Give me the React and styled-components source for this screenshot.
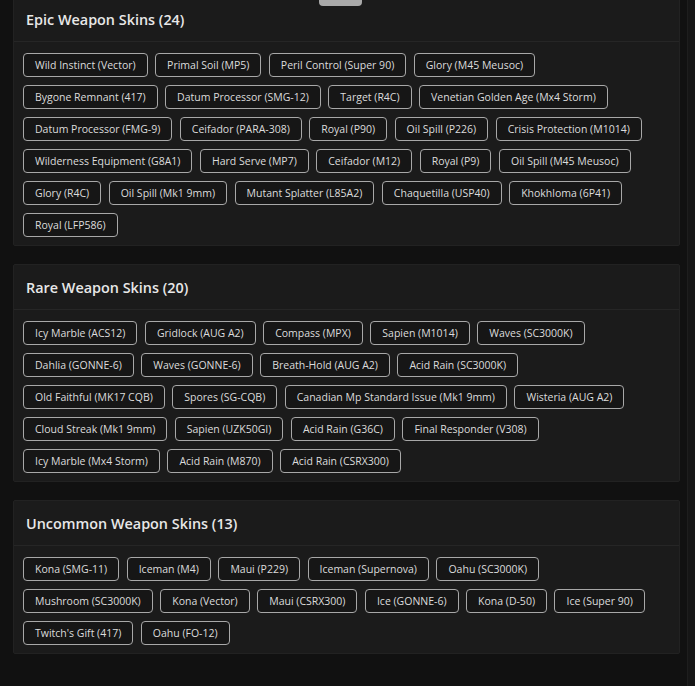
import React from "react";
import styled, { createGlobalStyle } from "styled-components";

const sections = [
  {
    title: "Epic Weapon Skins",
    rows: [
      ["Wild Instinct (Vector)", "Primal Soil (MP5)", "Peril Control (Super 90)", "Glory (M45 Meusoc)"],
      ["Bygone Remnant (417)", "Datum Processor (SMG-12)", "Target (R4C)", "Venetian Golden Age (Mx4 Storm)"],
      ["Datum Processor (FMG-9)", "Ceifador (PARA-308)", "Royal (P90)", "Oil Spill (P226)", "Crisis Protection (M1014)"],
      ["Wilderness Equipment (G8A1)", "Hard Serve (MP7)", "Ceifador (M12)", "Royal (P9)", "Oil Spill (M45 Meusoc)"],
      ["Glory (R4C)", "Oil Spill (Mk1 9mm)", "Mutant Splatter (L85A2)", "Chaquetilla (USP40)", "Khokhloma (6P41)"],
      ["Royal (LFP586)"],
    ],
  },
  {
    title: "Rare Weapon Skins",
    rows: [
      ["Icy Marble (ACS12)", "Gridlock (AUG A2)", "Compass (MPX)", "Sapien (M1014)", "Waves (SC3000K)"],
      ["Dahlia (GONNE-6)", "Waves (GONNE-6)", "Breath-Hold (AUG A2)", "Acid Rain (SC3000K)"],
      ["Old Faithful (MK17 CQB)", "Spores (SG-CQB)", "Canadian Mp Standard Issue (Mk1 9mm)", "Wisteria (AUG A2)"],
      ["Cloud Streak (Mk1 9mm)", "Sapien (UZK50GI)", "Acid Rain (G36C)", "Final Responder (V308)"],
      ["Icy Marble (Mx4 Storm)", "Acid Rain (M870)", "Acid Rain (CSRX300)"],
    ],
  },
  {
    title: "Uncommon Weapon Skins",
    rows: [
      ["Kona (SMG-11)", "Iceman (M4)", "Maui (P229)", "Iceman (Supernova)", "Oahu (SC3000K)"],
      ["Mushroom (SC3000K)", "Kona (Vector)", "Maui (CSRX300)", "Ice (GONNE-6)", "Kona (D-50)", "Ice (Super 90)"],
      ["Twitch's Gift (417)", "Oahu (FO-12)"],
    ],
  },
];

export default function App() {
  return (
    <>
      <GlobalStyle />
      <Page>
        <TopTab />
        <Content>
          {sections.map((s) => (
            <Card key={s.title}>
              <CardHeader>
                <Title>
                  {s.title} ({s.rows.flat().length})
                </Title>
              </CardHeader>
              <ChipArea>
                {s.rows.map((row, i) => (
                  <ChipRow key={i}>
                    {row.map((name) => (
                      <Chip key={name}>{name}</Chip>
                    ))}
                  </ChipRow>
                ))}
              </ChipArea>
            </Card>
          ))}
        </Content>
        <ScrollTrack />
      </Page>
    </>
  );
}

const GlobalStyle = createGlobalStyle`
  html, body {
    margin: 0;
    padding: 0;
    background: #111111;
    overflow: hidden;
  }
  body {
    font-family: "Open Sans", "Liberation Sans", sans-serif;
    color: #e6e6e6;
  }
`;

const Page = styled.div`
  position: relative;
  display: flex;
  height: 686px;
  overflow: hidden;
  background: #111111;
`;

const TopTab = styled.div`
  position: absolute;
  top: 0;
  left: 319px;
  width: 43px;
  height: 6px;
  background: #a9a9a9;
  border-radius: 0 0 4px 4px;
  z-index: 2;
`;

const Content = styled.div`
  flex: 1;
  display: flex;
  flex-direction: column;
  gap: 18px;
  padding: 0 7px 0 13px;
  margin-top: -4px;
`;

const ScrollTrack = styled.div`
  width: 7px;
  background: #161616;
  border-left: 1px solid #1e1e1e;
`;

const Card = styled.section`
  background: #1b1b1b;
  border: 1px solid #222222;
  border-radius: 2px;
`;

const CardHeader = styled.div`
  height: 44px;
  display: flex;
  align-items: center;
  padding: 0 12px;
  border-bottom: 1px solid #262626;
`;

const Title = styled.h2`
  margin: 0;
  font-size: 14.4px;
  font-weight: 600;
  color: #e8e8e8;
`;

const ChipArea = styled.div`
  display: flex;
  flex-direction: column;
  gap: 8px;
  padding: 11px 10px 8px 9px;
`;

const ChipRow = styled.div`
  display: flex;
  gap: 7.5px;
`;

const Chip = styled.span`
  box-sizing: border-box;
  height: 24px;
  display: inline-flex;
  align-items: center;
  padding: 0 11px;
  border: 1px solid #a8a8a8;
  border-radius: 4px;
  background: #161616;
  font-size: 10.5px;
  color: #dcdcdc;
  white-space: nowrap;
`;
